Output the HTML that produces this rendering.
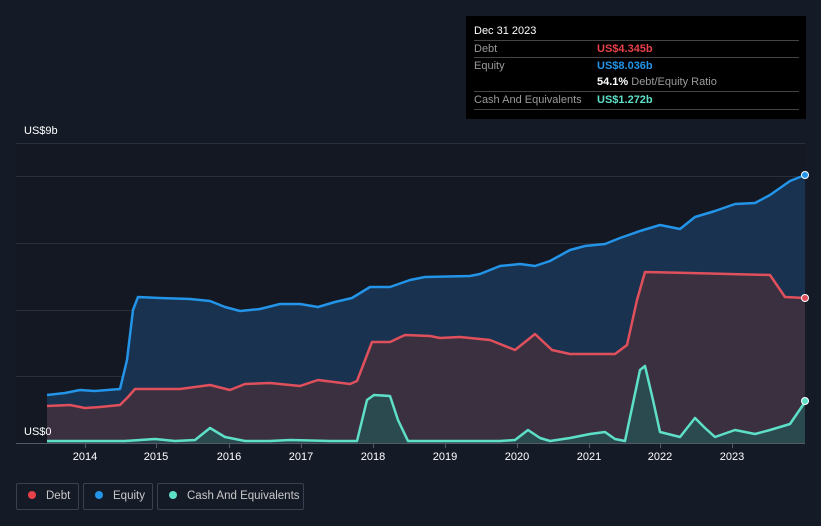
<!DOCTYPE html>
<html><head><style>
html,body{margin:0;width:821px;height:526px;overflow:hidden}
body{background:#151b26;font-family:"Liberation Sans",sans-serif;position:relative}
.tt{position:absolute;left:466px;top:16px;width:340px;height:103px;background:#000;color:#fff;font-size:11px}
.row{position:absolute;left:8px;width:325px;border-top:1px solid #444;height:17px;line-height:17px}
.lab{color:#9a9a9a;position:absolute;left:0}
.val{position:absolute;left:123px;font-weight:bold;white-space:nowrap}
.leg{position:absolute;top:483px;height:27px;border:1px solid #3a404c;border-radius:2px;color:#c8c8c8;font-size:11.5px;line-height:25px;box-sizing:border-box;white-space:nowrap}
.dot{display:inline-block;width:8px;height:8px;border-radius:50%;margin:0 10px 0 11px}
.yr{position:absolute;top:451px;color:#fff;font-size:11px;transform:translateX(-50%)}
</style></head><body>
<svg width="821" height="526" style="position:absolute;left:0;top:0">
<rect x="16" y="143" width="789" height="300" fill="#131822"/>
<g stroke="#2a303b" stroke-width="1">
<line x1="16" y1="143.5" x2="805" y2="143.5"/><line x1="16" y1="176.5" x2="805" y2="176.5"/><line x1="16" y1="243.5" x2="805" y2="243.5"/><line x1="16" y1="310.5" x2="805" y2="310.5"/><line x1="16" y1="376.5" x2="805" y2="376.5"/>
</g>
<polygon fill="#18324f" points="47,395 65,393 80,390 95,391 120,389 127,360 133,310 138,297 160,298 190,299 210,301 225,307 240,311 260,309 280,304 300,304 318,307 335,302 352,298 370,287 390,287 410,280 425,277 470,276 480,274 500,266 520,264 535,266 550,261 570,250 585,246 605,244 620,238 640,231 660,225 680,229 695,217 715,211 735,204 755,203 770,195 790,181 805,175 805,443 47,443"/>
<polygon fill="#3a3040" points="47,406 70,405 85,408 100,407 120,405 128,397 135,389 150,389 180,389 210,385 230,390 245,384 270,383 300,386 318,380 350,384 357,381 372,342 390,342 405,335 430,336 440,338 460,337 490,340 515,350 535,334 552,350 570,354 615,354 627,345 637,300 645,272 690,273 770,275 785,297 805,298 805,443 47,443"/>
<polygon fill="#2a4a50" points="47,441 80,441 125,441 155,439 175,441 195,440 210,428 225,437 245,441 270,441 290,440 330,441 357,441 367,400 374,395 390,396 398,420 408,441 440,441 500,441 515,440 528,430 540,438 550,441 570,438 590,434 605,432 615,439 625,441 640,370 645,366 653,400 660,432 680,437 695,418 705,428 715,437 735,430 755,434 770,430 790,424 805,402 805,443 47,443"/>
<polyline fill="none" stroke="#2394e8" stroke-width="2.5" stroke-linejoin="round" points="47,395 65,393 80,390 95,391 120,389 127,360 133,310 138,297 160,298 190,299 210,301 225,307 240,311 260,309 280,304 300,304 318,307 335,302 352,298 370,287 390,287 410,280 425,277 470,276 480,274 500,266 520,264 535,266 550,261 570,250 585,246 605,244 620,238 640,231 660,225 680,229 695,217 715,211 735,204 755,203 770,195 790,181 805,175"/>
<polyline fill="none" stroke="#e0505c" stroke-width="2.5" stroke-linejoin="round" points="47,406 70,405 85,408 100,407 120,405 128,397 135,389 150,389 180,389 210,385 230,390 245,384 270,383 300,386 318,380 350,384 357,381 372,342 390,342 405,335 430,336 440,338 460,337 490,340 515,350 535,334 552,350 570,354 615,354 627,345 637,300 645,272 690,273 770,275 785,297 805,298"/>
<polyline fill="none" stroke="#5ee0c8" stroke-width="2.5" stroke-linejoin="round" points="47,441 80,441 125,441 155,439 175,441 195,440 210,428 225,437 245,441 270,441 290,440 330,441 357,441 367,400 374,395 390,396 398,420 408,441 440,441 500,441 515,440 528,430 540,438 550,441 570,438 590,434 605,432 615,439 625,441 640,370 645,366 653,400 660,432 680,437 695,418 705,428 715,437 735,430 755,434 770,430 790,424 805,402"/>
<line x1="16" y1="443.5" x2="805" y2="443.5" stroke="#555b66"/>
<g stroke="#555b66"><line x1="85.5" y1="443" x2="85.5" y2="448"/><line x1="156.5" y1="443" x2="156.5" y2="448"/><line x1="229.5" y1="443" x2="229.5" y2="448"/><line x1="301.5" y1="443" x2="301.5" y2="448"/><line x1="373.5" y1="443" x2="373.5" y2="448"/><line x1="445.5" y1="443" x2="445.5" y2="448"/><line x1="517.5" y1="443" x2="517.5" y2="448"/><line x1="589.5" y1="443" x2="589.5" y2="448"/><line x1="660.5" y1="443" x2="660.5" y2="448"/><line x1="732.5" y1="443" x2="732.5" y2="448"/></g>
<circle cx="805" cy="175" r="3.5" fill="#2394e8" stroke="#fff" stroke-width="1"/>
<circle cx="805" cy="298" r="3.5" fill="#e0505c" stroke="#fff" stroke-width="1"/>
<circle cx="805" cy="401" r="3.5" fill="#5ee0c8" stroke="#fff" stroke-width="1"/>
</svg>
<div style="position:absolute;left:24px;top:125px;color:#fff;font-size:11px">US$9b</div>
<div style="position:absolute;left:24px;top:426px;color:#fff;font-size:11px">US$0</div>
<div class="yr" style="left:85px">2014</div><div class="yr" style="left:156px">2015</div><div class="yr" style="left:229px">2016</div><div class="yr" style="left:301px">2017</div><div class="yr" style="left:373px">2018</div><div class="yr" style="left:445px">2019</div><div class="yr" style="left:517px">2020</div><div class="yr" style="left:589px">2021</div><div class="yr" style="left:660px">2022</div><div class="yr" style="left:732px">2023</div>
<div class="tt">
<div style="position:absolute;left:8px;top:9px;font-size:11px">Dec 31 2023</div>
<div class="row" style="top:24px"><span class="lab">Debt</span><span class="val" style="color:#e8404a">US$4.345b</span></div>
<div class="row" style="top:41px"><span class="lab">Equity</span><span class="val" style="color:#2394e8">US$8.036b</span></div>
<div class="row" style="top:58px;border-top:none"><span class="val">54.1% <span style="color:#9a9a9a;font-weight:normal">Debt/Equity Ratio</span></span></div>
<div class="row" style="top:75px;border-bottom:1px solid #444"><span class="lab">Cash And Equivalents</span><span class="val" style="color:#5ee0c8">US$1.272b</span></div>
</div>
<div class="leg" style="left:16px;width:63px"><span class="dot" style="background:#e8404a"></span>Debt</div>
<div class="leg" style="left:83px;width:70px"><span class="dot" style="background:#2394e8"></span>Equity</div>
<div class="leg" style="left:157px;width:147px"><span class="dot" style="background:#5ee0c8"></span>Cash And Equivalents</div>
</body></html>
